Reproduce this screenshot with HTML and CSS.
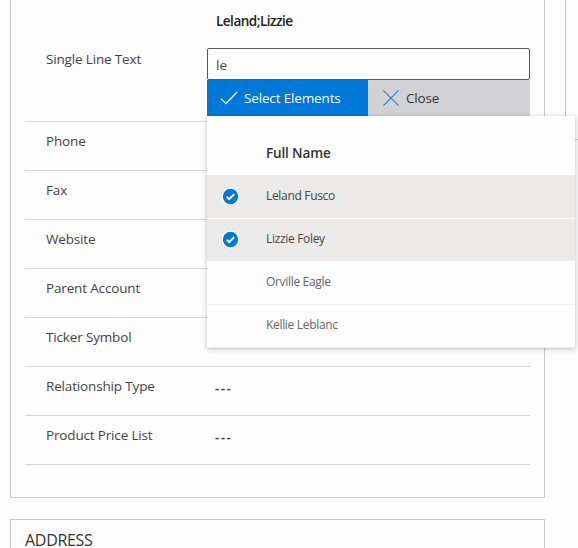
FILE: index.html
```html
<!DOCTYPE html>
<html lang="en">
<head>
<meta charset="utf-8">
<title>Account</title>
<link rel="stylesheet" href="styles.css">
</head>
<body>
<div class="page">
  <main class="column">
    <section class="card details">
      <div class="row row-editor">
        <label class="label" for="query">Single Line Text</label>
        <div class="editor">
          <div class="selection">Leland;Lizzie</div>
          <input class="query" id="query" value="le">
          <div class="actions">
            <button class="action select">
              <svg width="18" height="14" viewBox="0 0 18 14"><path d="M.8 7.6 6 12.6 17 1" fill="none" stroke="currentColor" stroke-width="1.3"/></svg><span>Select Elements</span>
            </button>
            <button class="action close">
              <svg width="16" height="16" viewBox="0 0 16 16"><path d="M.4.4 15.6 15.6M15.6.4.4 15.6" fill="none" stroke="#1684d8" stroke-width="1.1"/></svg><span>Close</span>
            </button>
          </div>
          <div class="dropdown">
            <div class="head">Full Name</div>
            <div class="option checked first"><svg class="tick" width="19" height="19" viewBox="0 0 19 19"><circle cx="9.5" cy="9.5" r="9" fill="#fff"/><circle cx="9.5" cy="9.5" r="7.7" fill="#0078d7"/><path d="M5.7 9.7 8.2 12.2 13.2 7.1" fill="none" stroke="#fff" stroke-width="2"/></svg><span>Leland Fusco</span></div>
            <div class="option checked"><svg class="tick" width="19" height="19" viewBox="0 0 19 19"><circle cx="9.5" cy="9.5" r="9" fill="#fff"/><circle cx="9.5" cy="9.5" r="7.7" fill="#0078d7"/><path d="M5.7 9.7 8.2 12.2 13.2 7.1" fill="none" stroke="#fff" stroke-width="2"/></svg><span>Lizzie Foley</span></div>
            <div class="option"><span>Orville Eagle</span></div>
            <div class="option"><span>Kellie Leblanc</span></div>
          </div>
        </div>
      </div>
      <div class="row"><span class="label">Phone</span></div>
      <div class="row"><span class="label">Fax</span></div>
      <div class="row"><span class="label">Website</span></div>
      <div class="row"><span class="label">Parent Account</span></div>
      <div class="row"><span class="label">Ticker Symbol</span></div>
      <div class="row"><span class="label">Relationship Type</span><span class="value">---</span></div>
      <div class="row"><span class="label">Product Price List</span><span class="value">---</span></div>
    </section>
    <section class="card address"><h2>ADDRESS</h2></section>
  </main>
  <aside class="side"></aside>
</div>
</body>
</html>
```
FILE: styles.css
```css
* { box-sizing: border-box; }
body {
  margin: 0;
  background: #fdfdfd;
  color: #444;
  font: 13.5px/20px "Segoe UI", "Open Sans", sans-serif;
}
.page {
  display: flex;
  gap: 20px;
  width: 578px;
  height: 548px;
  padding-left: 10px;
  overflow: hidden;
}
.column { flex: 0 0 535px; }
.card { border: 1px solid #c8c8c8; }
.details {
  height: 498px;
  padding: 0 14px;
  border-top: 0;
}
.row {
  display: flex;
  height: 49px;
  padding: 9px 0 0 21px;
  border-bottom: 1px solid #d6d6d6;
}
.row-editor { height: 122px; padding-top: 0; }
.label { flex: 0 0 161px; letter-spacing: -.16px; }
.row-editor .label { padding-top: 49px; }
.value {
  padding: 2px 0 0 8px;
  font-weight: 600;
  letter-spacing: 1.4px;
}
.editor { position: relative; width: 323px; padding-top: 11px; }
.selection {
  height: 37px;
  padding-left: 9px;
  color: #222;
  font-weight: 600;
  letter-spacing: -.5px;
}
.query {
  display: block;
  width: 323px;
  height: 32px;
  padding: 2px 8px 0;
  border: 1px solid #555;
  border-radius: 2px;
  background: #fdfdfd;
  color: #444;
  font: inherit;
}
.actions { display: flex; height: 36px; }
.action {
  display: flex;
  align-items: center;
  border: 0;
  padding: 0;
  font: inherit;
  letter-spacing: -.15px;
}
.select {
  width: 161px;
  padding-left: 13px;
  gap: 6px;
  background: #0078d7;
  color: #fff;
}
.close {
  width: 162px;
  padding-left: 15px;
  gap: 7px;
  background: #d2d2d4;
  color: #333;
}
.dropdown {
  position: absolute;
  top: 116px;
  left: 0;
  width: 368px;
  height: 232px;
  background: #fdfdfd;
  box-shadow: 0 1px 5px rgba(0, 0, 0, .25);
}
.head {
  height: 59px;
  padding: 27px 0 0 59px;
  color: #333;
  font-weight: 600;
  letter-spacing: -.15px;
}
.option {
  display: flex;
  height: 43px;
  padding: 10px 0 0 59px;
  border-bottom: 1px solid #eee;
  color: #666;
  font-size: 12px;
  letter-spacing: -.32px;
}
.option.checked {
  padding-left: 14px;
  background: #ebeae9;
  border-color: #fdfdfd;
  color: #444;
}
.option.first { height: 44px; padding-top: 11px; }
.tick { margin: 1px 26px 0 0; }
.address { height: 60px; margin-top: 21px; padding: 12px 14px; }
.address h2 {
  margin: 0;
  color: #333;
  font-size: 16px;
  font-weight: 400;
  line-height: 16px;
  letter-spacing: -.3px;
}
.side {
  width: 40px;
  flex: none;
  height: 140px;
  border: 1px solid #c8c8c8;
  border-top: 0;
}
```
